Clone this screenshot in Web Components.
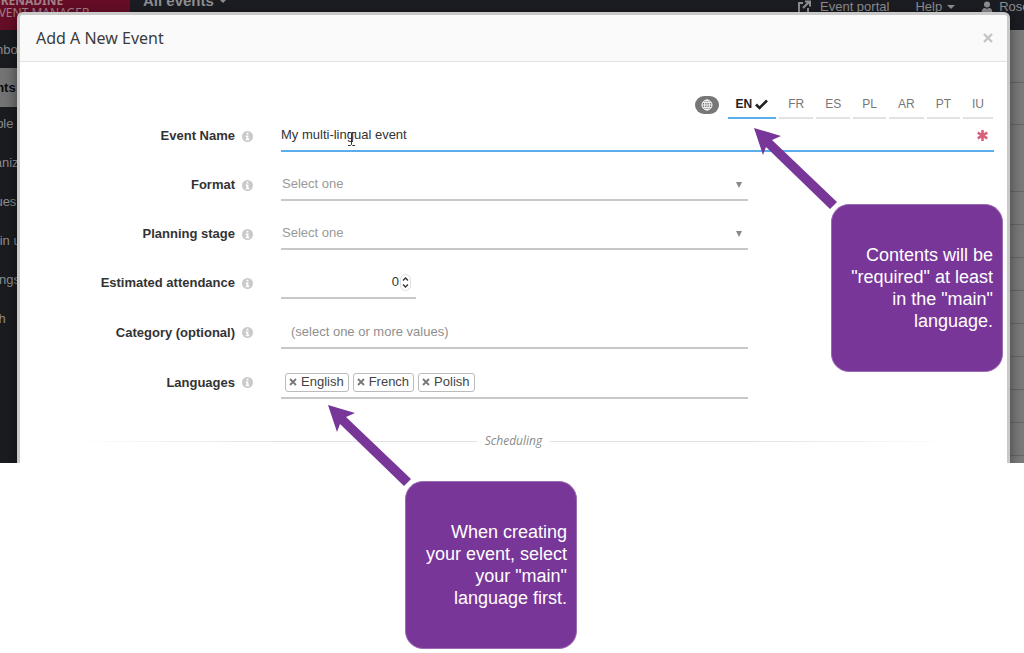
<!DOCTYPE html>
<html lang="en">
<head>
<meta charset="utf-8">
<meta name="viewport" content="width=device-width, initial-scale=1">
<title>Add A New Event</title>
<style>
  body { margin: 0; background: #fff; font: 13px/20px "Liberation Sans", Arial, sans-serif; color: #333; }
</style>
</head>
<body>
<event-page></event-page>

<template id="t-page">
  <style>
    :host { display: block; position: relative; min-height: 100vh; }
    .screen { display: block; position: relative; overflow: hidden; }
    app-shell { position: absolute; inset: 0; }
    event-dialog { margin: 12px 14px 0 17px; }
    .main-note { left: 831px; top: 204px; }
    .first-note { left: 405px; top: 481px; }
  </style>
  <div class="screen">
    <app-shell></app-shell>
    <event-dialog></event-dialog>
  </div>
  <call-out class="main-note">Contents will be "required" at least in the "main" language.</call-out>
  <call-out class="first-note">When creating your event, select your "main" language first.</call-out>
</template>

<template id="t-shell">
  <style>
    :host { display: flex; flex-direction: column; overflow: hidden; background: #7b7b7b; color: #8e8e90; }
    a { color: inherit; text-decoration: none; }
    header { display: flex; height: 30px; flex: none; background: #1b1d22; overflow: hidden; }
    .brand { width: 130px; box-sizing: border-box; flex: none; background: #660d27; color: #a28089; font: 12px/12px "Noto Sans", sans-serif; margin-top: -5px; height: 35px; white-space: nowrap; }
    .brand b, .brand span { display: block; margin-left: -8px; }
    .scope { margin: -8px 0 0 13px; font-weight: bold; font-size: 15px; line-height: 18px; height: 18px; }
    .scope svg { margin-left: 5px; vertical-align: 3px; }
    nav.top { margin-left: auto; width: 227px; display: flex; white-space: nowrap; line-height: 14px; height: 14px; }
    nav.top a { display: flex; align-items: center; flex: none; }
    .portal { gap: 9px; margin-right: 26px; }
    .help { gap: 5px; margin-right: 26px; }
    .user { gap: 6px; }
    .below { display: flex; flex: 1; }
    .side { width: 130px; background: #1a1c20; flex: none; }
    .side a { display: block; height: 39px; line-height: 33px; padding-right: 20px; text-indent: -27px; white-space: nowrap; }
    .side a.first { height: 38px; line-height: 39px; }
    .side a.on { background: #747474; color: #0c0c0c; font-weight: bold; line-height: 40px; }
    .list { flex: 1; }
    .list div { height: 33px; border-bottom: 1px solid #676767; box-sizing: border-box; }
    .list .a { height: 53px; } .list .b { height: 42px; } .list .c { height: 67px; }
  </style>
  <header>
    <div class="brand"><b>GRENADINE</b><span>EVENT MANAGER</span></div>
    <a class="scope" href="#">All events<svg width="8" height="4"><path d="M0 0h8L4 4z" fill="currentColor"/></svg></a>
    <nav class="top">
      <a class="portal" href="#"><svg width="14" height="14" viewBox="0 0 14 14" fill="none" stroke="currentColor" stroke-width="2"><path d="M6 3H2v10h9V8M8 1.5h5v5M12.500 1.500L6 8"/></svg>Event portal</a>
      <a class="help" href="#">Help<svg width="8" height="4"><path d="M0 0h8L4 4z" fill="currentColor"/></svg></a>
      <a class="user" href="#"><svg width="12" height="12" viewBox="0 0 12 12" fill="currentColor"><circle cx="6" cy="3.500" r="3"/><path d="M1 12c-1-3 1-5 3-5 1 1 3 1 4 0 2 0 4 2 3 5z"/></svg>Rose</a>
    </nav>
  </header>
  <div class="below">
    <nav class="side">
      <a class="first" href="#">Dashboard</a><a class="on" href="#">Events</a><a href="#">People</a><a href="#">Organizations</a><a href="#">Venues</a><a href="#">Admin users</a><a href="#">Settings</a><a href="#">Trash</a>
    </nav>
    <div class="list"><div class="a"></div><div class="b"></div><div class="c"></div><div></div><div></div><div></div><div></div><div></div><div></div><div></div><div></div></div>
  </div>
</template>

<template id="t-row">
  <style>
    :host { display: grid; grid-template-columns: 215px 11px minmax(0, 1fr); column-gap: 7px; align-items: center; }
    .label { text-align: right; font-weight: bold; }
    .control { padding-left: 21px; }
    svg { display: block; }
  </style>
  <div class="label"><slot name="label"></slot></div>
  <svg width="11" height="11" viewBox="0 0 12 12" role="img" aria-label="Info"><circle cx="6" cy="6" r="6" fill="#c9c9c9"/><path d="M5 2h2v1.800H5zM4 5h3v3.500h1V10H4V8.500h1v-2H4z" fill="#fff"/></svg>
  <div class="control"><slot></slot></div>
</template>

<template id="t-tag">
  <style>
    :host { display: inline-flex; align-items: center; gap: 4px; height: 19px; box-sizing: border-box; padding: 0 4px 0 3px; border: 1px solid #bbb; border-radius: 3px; background: #fff; color: #444; }
    button { all: unset; display: flex; color: #777; cursor: pointer; }
  </style>
  <button type="button" aria-label="Remove"><svg width="8" height="8" viewBox="0 0 8 8" stroke="currentColor" stroke-width="1.800"><path d="M1 1l6 6M7 1L1 7"/></svg></button><span><slot></slot></span>
</template>

<template id="t-tabs">
  <style>
    :host { display: flex; justify-content: flex-end; align-items: flex-start; gap: 3px; height: 28px; }
    button { font: 12px/26px "Liberation Sans", Arial, sans-serif; height: 28px; color: #777; background: none; border: 0; border-bottom: 2px solid #e2e2e2; padding: 0 9px; margin: 0; }
    button.on { font-weight: bold; color: #222; border-color: #5aaeea; display: flex; align-items: center; gap: 3px; padding: 0 8px; }
    .globe { display: flex; align-items: center; justify-content: center; width: 24px; height: 18px; margin: 5px 6px 0 0; padding: 0; border: 0; border-radius: 9px; background: #777; }
  </style>
  <button type="button" class="globe" aria-label="All languages"><svg width="12" height="12" viewBox="0 0 12 12" fill="none" stroke="#fff"><circle cx="6" cy="6" r="5"/><ellipse cx="6" cy="6" rx="2.300" ry="5"/><path d="M1 6h10M6 1v10M1.800 3.500h8.400M1.800 8.500h8.400" stroke-width=".8"/></svg></button>
  <button type="button" class="on">EN<svg width="13" height="11" viewBox="0 0 13 11" fill="none" stroke="currentColor" stroke-width="2.600"><path d="M1 5.500L4.500 9 12 1.500"/></svg></button>
  <button type="button">FR</button><button type="button">ES</button><button type="button">PL</button><button type="button">AR</button><button type="button">PT</button><button type="button">IU</button>
</template>

<template id="t-dialog">
  <style>
    :host { display: block; position: relative; background: #fff; border: 3px solid #c9c9c9; border-bottom: 0; border-radius: 6px 6px 0 0; box-shadow: 0 4px 14px rgba(0, 0, 0, .5); }
    header { display: flex; align-items: center; justify-content: space-between; height: 46px; padding: 0 14px 0 16px; background: #fafafa; border-bottom: 1px solid #e3e3e3; border-radius: 3px 3px 0 0; }
    h1 { margin: 0; font: 16px/24px "Noto Sans", sans-serif; color: #3c3c3c; }
    .close { all: unset; display: flex; color: #c4c4c4; cursor: pointer; }
    form { display: grid; row-gap: 17px; padding: 29px 13px 12px 0; }
    lang-tabs { margin: 0 1px -16px 0; }
    .field { display: flex; align-items: center; position: relative; box-sizing: border-box; height: 32px; max-width: 467px; border-bottom: 2px solid #c8c8c8; }
    .tall { height: 33px; }
    .wide { max-width: none; border-color: #5aaeea; }
    .small { width: 135px; }
    input, select { all: unset; flex: 1; min-width: 0; height: 30px; line-height: 30px; color: #333; }
    select { color: #999; padding-left: 1px; }
    input::placeholder { color: #8f8f8f; opacity: 1; }
    .wide svg.star { margin-right: 6px; }
    .cursor { position: absolute; left: 66px; top: 12px; }
    .arrow { position: absolute; right: 6px; top: 13px; pointer-events: none; }
    #attendance { text-align: right; -moz-appearance: textfield; }
    #attendance::-webkit-inner-spin-button { display: none; }
    .spin { margin: 0 5px 0 1px; }
    #category { padding-left: 10px; }
    .tags { gap: 4px; padding: 1px 0 0 4px; }
    .tags input { width: 20px; }
    .section { display: flex; align-items: center; gap: 8px; margin: 15px 39px 0 52px; font: italic 12px/20px "Open Sans", sans-serif; color: #8a8a8a; }
    .section::before, .section::after { content: ""; flex: 1; height: 1px; background: linear-gradient(to right, #fff, #e2e2e2 50%); }
    .section::after { background: linear-gradient(to left, #fff, #e2e2e2 50%); }
  </style>
  <header>
    <h1>Add A New Event</h1>
    <button class="close" type="button" aria-label="Close"><svg width="10" height="10" viewBox="0 0 10 10" stroke="currentColor" stroke-width="2.400"><path d="M1 1l8 8M9 1L1 9"/></svg></button>
  </header>
  <form>
    <lang-tabs></lang-tabs>
    <form-row>
      <label slot="label" for="name">Event Name</label>
      <div class="field wide"><input id="name" type="text" value="My multi-lingual event"><svg class="cursor" width="9" height="14" viewBox="0 0 9 14" fill="none" stroke="#333"><path d="M1 .5h2.500l1 1 1-1H8M1 13.500h2.500l1-1 1 1H8M4.500 1.500v11M3 9.500h3"/></svg><svg class="star" width="11" height="11" viewBox="0 0 11 11" stroke="#d9607b" stroke-width="2.600"><path d="M5.500 0v11M.7 2.700l9.600 5.600M10.300 2.700L.7 8.300"/></svg></div>
    </form-row>
    <form-row>
      <label slot="label" for="format">Format</label>
      <div class="field"><select id="format"><option>Select one</option></select><svg class="arrow" width="6" height="6"><path d="M0 0h6L3 6z" fill="#888"/></svg></div>
    </form-row>
    <form-row>
      <label slot="label" for="stage">Planning stage</label>
      <div class="field"><select id="stage"><option>Select one</option></select><svg class="arrow" width="6" height="6"><path d="M0 0h6L3 6z" fill="#888"/></svg></div>
    </form-row>
    <form-row>
      <label slot="label" for="attendance">Estimated attendance</label>
      <div class="field small"><input id="attendance" type="number" value="0"><svg class="spin" width="11" height="17" viewBox="0 0 11 17" fill="none"><rect x=".5" y=".5" width="10" height="16" rx="5" fill="#fff" stroke="#ddd"/><path d="M3 6.500L5.500 4 8 6.500M3 10.500L5.500 13 8 10.500" stroke="#333" stroke-width="1.400"/></svg></div>
    </form-row>
    <form-row>
      <label slot="label" for="category">Category (optional)</label>
      <div class="field tall"><input id="category" type="text" placeholder="(select one or more values)"></div>
    </form-row>
    <form-row>
      <label slot="label" for="languages">Languages</label>
      <div class="field tall tags"><tag-chip>English</tag-chip><tag-chip>French</tag-chip><tag-chip>Polish</tag-chip><input id="languages" type="text"></div>
    </form-row>
    <div class="section">Scheduling</div>
  </form>
</template>

<template id="t-callout">
  <style>
    :host { display: flex; align-items: center; position: absolute; box-sizing: border-box; width: 172px; height: 168px; padding: 0 9px 0 16px; border: 1px solid #9a6bb3; border-radius: 18px; background: #783699; color: #fff; font-size: 18px; line-height: 22px; text-align: right; }
    svg { position: absolute; left: -78px; top: -77px; }
    p { margin: 0; flex: 1; }
  </style>
  <svg width="84" height="84" viewBox="0 0 84 84" aria-hidden="true"><path d="M0 0L27 8 18 12 83 74 76 81 12 19 9 27z" fill="#783699"/></svg>
  <p><slot></slot></p>
</template>

<script>
  const define = (name, templateId) => customElements.define(name, class extends HTMLElement {
    constructor() {
      super();
      const content = document.getElementById(templateId).content;
      this.attachShadow({ mode: "open" }).append(content.cloneNode(true));
    }
  });
  define("app-shell", "t-shell");
  define("form-row", "t-row");
  define("tag-chip", "t-tag");
  define("lang-tabs", "t-tabs");
  define("event-dialog", "t-dialog");
  define("call-out", "t-callout");
  define("event-page", "t-page");
</script>
</body>
</html>
